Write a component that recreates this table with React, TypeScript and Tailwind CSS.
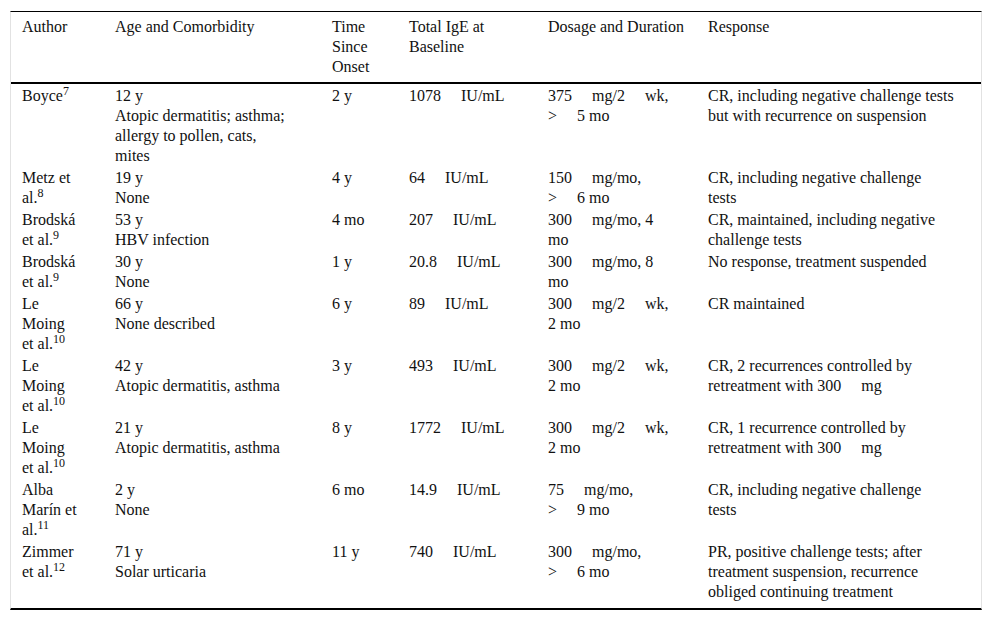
import React from 'react';

// each cell is a list of lines; "|" marks the wide gap before a unit, "^" starts a superscript
type Cell = string[];

const header: Cell[] = [
  ['Author'],
  ['Age and Comorbidity'],
  ['Time', 'Since', 'Onset'],
  ['Total IgE at', 'Baseline'],
  ['Dosage and Duration'],
  ['Response'],
];

const rows: Cell[][] = [
  [
    ['Boyce^7'],
    ['12 y', 'Atopic dermatitis; asthma;', 'allergy to pollen, cats,', 'mites'],
    ['2 y'],
    ['1078|IU/mL'],
    ['375|mg/2|wk,', '>|5 mo'],
    ['CR, including negative challenge tests', 'but with recurrence on suspension'],
  ],
  [
    ['Metz et', 'al.^8'],
    ['19 y', 'None'],
    ['4 y'],
    ['64|IU/mL'],
    ['150|mg/mo,', '>|6 mo'],
    ['CR, including negative challenge', 'tests'],
  ],
  [
    ['Brodská', 'et al.^9'],
    ['53 y', 'HBV infection'],
    ['4 mo'],
    ['207|IU/mL'],
    ['300|mg/mo, 4', 'mo'],
    ['CR, maintained, including negative', 'challenge tests'],
  ],
  [
    ['Brodská', 'et al.^9'],
    ['30 y', 'None'],
    ['1 y'],
    ['20.8|IU/mL'],
    ['300|mg/mo, 8', 'mo'],
    ['No response, treatment suspended'],
  ],
  [
    ['Le', 'Moing', 'et al.^10'],
    ['66 y', 'None described'],
    ['6 y'],
    ['89|IU/mL'],
    ['300|mg/2|wk,', '2 mo'],
    ['CR maintained'],
  ],
  [
    ['Le', 'Moing', 'et al.^10'],
    ['42 y', 'Atopic dermatitis, asthma'],
    ['3 y'],
    ['493|IU/mL'],
    ['300|mg/2|wk,', '2 mo'],
    ['CR, 2 recurrences controlled by', 'retreatment with 300|mg'],
  ],
  [
    ['Le', 'Moing', 'et al.^10'],
    ['21 y', 'Atopic dermatitis, asthma'],
    ['8 y'],
    ['1772|IU/mL'],
    ['300|mg/2|wk,', '2 mo'],
    ['CR, 1 recurrence controlled by', 'retreatment with 300|mg'],
  ],
  [
    ['Alba', 'Marín et', 'al.^11'],
    ['2 y', 'None'],
    ['6 mo'],
    ['14.9|IU/mL'],
    ['75|mg/mo,', '>|9 mo'],
    ['CR, including negative challenge', 'tests'],
  ],
  [
    ['Zimmer', 'et al.^12'],
    ['71 y', 'Solar urticaria'],
    ['11 y'],
    ['740|IU/mL'],
    ['300|mg/mo,', '>|6 mo'],
    ['PR, positive challenge tests; after', 'treatment suspension, recurrence', 'obliged continuing treatment'],
  ],
];

const Line: React.FC<{ text: string }> = ({ text }) => {
  const [main, sup] = text.split('^');
  const parts = main.split('|');
  return (
    <div className="whitespace-nowrap">
      {parts.map((p, i) => (
        <React.Fragment key={i}>
          {i > 0 && <span className="inline-block w-[20px]" />}
          {p}
        </React.Fragment>
      ))}
      {sup && <sup className="text-[12px] top-[-0.5em]">{sup}</sup>}
    </div>
  );
};

const Row: React.FC<{ cells: Cell[]; className?: string }> = ({ cells, className = '' }) => (
  <div className={`grid grid-cols-[92px_217px_77px_139px_160px_1fr] ${className}`}>
    {cells.map((cell, i) => (
      <div key={i} className={i === 0 ? 'pl-[11px]' : 'pl-3'}>
        {cell.map((line, j) => (
          <Line key={j} text={line} />
        ))}
      </div>
    ))}
  </div>
);

export default function App() {
  return (
    <div className="min-h-screen bg-white pl-[10px] pt-[11px] text-[16px] leading-[20px] text-[#111]" style={{ fontFamily: '"Liberation Serif", "Times New Roman", serif' }}>
      <div className="w-[972px] border-x border-x-[#e2e2e2] border-t border-t-black border-b-2 border-b-black">
        <Row cells={header} className="pt-[5px] pb-[5px] border-b-2 border-black" />
        <div className="pt-px pb-[5px]">
          {rows.map((r, i) => (
            <Row key={i} cells={r} className="py-px" />
          ))}
        </div>
      </div>
    </div>
  );
}
